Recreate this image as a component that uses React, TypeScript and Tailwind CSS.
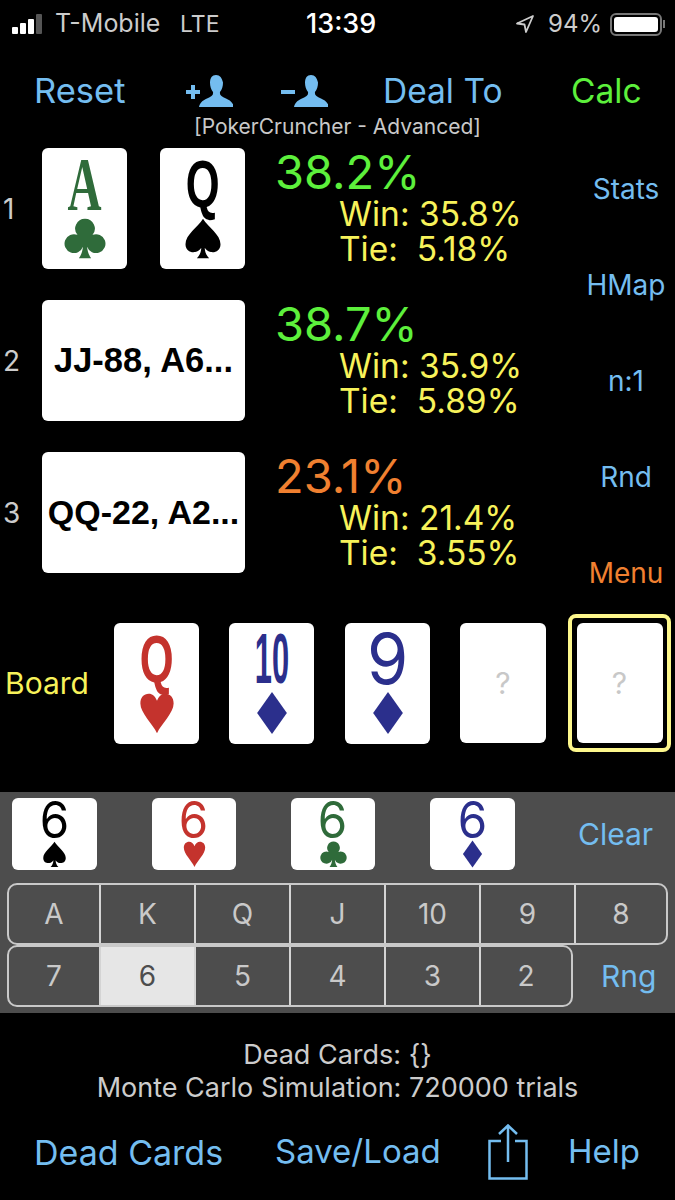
import React from 'react';

type Suit = 'spade' | 'heart' | 'diamond' | 'club';

const suitColor: Record<Suit, string> = {
  spade: 'text-black',
  heart: 'text-[#c4332d]',
  diamond: 'text-[#2b2f8c]',
  club: 'text-[#2f6b3a]',
};

const SuitIcon: React.FC<{ suit: Suit; className: string }> = ({ suit, className }) => (
  <svg viewBox="0 0 24 24" fill="currentColor" className={`${className} ${suitColor[suit]}`}>
    {suit === 'spade' && (
      <path d="M12 1C9 6 2 10 2 15.500 2 19 5 20.500 7.500 20c1.500-.3 2.800-1.200 3.500-2.500 0 2.500-1 4.500-2.500 6h7c-1.500-1.500-2.500-3.500-2.500-6 .7 1.300 2 2.200 3.500 2.500 2.500.5 5.500-1 5.500-4.500C22 10 15 6 12 1Z" />
    )}
    {suit === 'heart' && (
      <path d="M12 23.500C9.500 18 2.500 12 2.500 6.500 2.500 3 4.500 1 7.300 1 9.300 1 11 2.500 12 5c1-2.500 2.700-4 4.700-4C19.500 1 21.500 3 21.500 6.500 21.500 12 14.500 18 12 23.500Z" />
    )}
    {suit === 'diamond' && <path d="M12 0 20.500 12 12 24 3.500 12Z" />}
    {suit === 'club' && (
      <path d="M12 1a5.600 5.600 0 0 0-4.300 9.200A5.400 5.400 0 1 0 10.800 17c-.2 2.600-1 4.800-2.300 6.500h7c-1.300-1.700-2.100-3.900-2.300-6.500a5.400 5.400 0 1 0 3.100-6.800A5.600 5.600 0 0 0 12 1Z" />
    )}
  </svg>
);

const BigCard: React.FC<{ rank: string; suit: Suit; rankClass: string }> = ({ rank, suit, rankClass }) => (
  <div className="w-[85px] h-[121px] bg-white rounded-[6px] flex flex-col items-center pt-[10px] shrink-0">
    <div className={`h-[52px] flex items-center justify-center leading-none ${suitColor[suit]} ${rankClass}`}>{rank}</div>
    <SuitIcon suit={suit} className="w-[42px] h-[42px] mt-[7px]" />
  </div>
);

const BlankCard: React.FC = () => (
  <div className="w-[86px] h-[120px] bg-white rounded-[6px] flex items-center justify-center shrink-0">
    <span className="text-[30px] text-[#c8c8c8]">?</span>
  </div>
);

const PickCard: React.FC<{ suit: Suit; className: string }> = ({ suit, className }) => (
  <div className={`h-[72px] bg-white rounded-[6px] flex flex-col items-center pt-[3px] shrink-0 ${className}`}>
    <div className={`h-[38px] flex items-center text-[50px] leading-none font-normal scale-x-[0.95] ${suitColor[suit]}`}>6</div>
    <SuitIcon suit={suit} className="w-[27px] h-[28px] mt-[1px]" />
  </div>
);

const PersonIcon: React.FC<{ minus?: boolean }> = ({ minus }) => (
  <svg viewBox="0 0 47 32" fill="#74bdf0" className="w-[47px] h-[32px]">
    {minus ? <rect x="0" y="15" width="14" height="4" /> : <path d="M0 15h5v-5h4v5h5v4H9v5H5v-5H0Z" />}
    <path d="M30 0c-4 0-6 3-6 7.500 0 4 1 7 3 9.500.6 3-1.500 4.500-6 6.500-3 1.300-7 3.500-8 8.500h35c-1-5-5-7.200-8-8.500-4.500-2-6.600-3.500-6-6.500 2-2.500 3-5.500 3-9.500C36 3 34 0 30 0Z" />
  </svg>
);

const PlayerStats: React.FC<{ pct: string; win: string; tie: string; pctClass: string }> = ({ pct, win, tie, pctClass }) => (
  <div className="ml-[30px] -mt-[3px] flex flex-col">
    <div className={`h-[49px] text-[47px] leading-[48px] ${pctClass}`}>{pct}</div>
    <div className="ml-[64px] text-[33.500px] leading-[35px] text-[#f7f25a] whitespace-pre">
      <div>Win: {win}</div>
      <div>Tie:  {tie}</div>
    </div>
  </div>
);

const SegRow: React.FC<{ items: string[]; selected?: string; className: string }> = ({ items, selected, className }) => (
  <div className={`h-[62px] flex border-2 border-[#c9c9c9] rounded-[10px] overflow-hidden ${className}`}>
    {items.map((item, i) => (
      <div
        key={item}
        className={`flex items-center justify-center text-[28px] ${i === 0 ? 'w-[92px]' : i === items.length - 1 ? 'flex-1' : 'w-[95px]'} ${
          i < items.length - 1 ? 'border-r-2 border-[#d4d4d4]' : ''
        } ${item === selected ? 'bg-[#e6e6e6] text-[#4d4d4d]' : 'text-[#c9c9c9]'}`}
      >
        {item}
      </div>
    ))}
  </div>
);

const App: React.FC = () => {
  return (
    <div className="w-[675px] h-[1200px] bg-black overflow-hidden font-['Inter',sans-serif] text-[#74bdf0]">
      {/* status bar */}
      <div className="h-[48px] flex items-center pl-[12px] text-[#cccccc] text-[25px]">
        <div className="flex items-end gap-[2px] w-[36px] h-[20px]">
          <div className="w-[6px] h-[7px] rounded-[1px] bg-white" />
          <div className="w-[6px] h-[11px] rounded-[1px] bg-white" />
          <div className="w-[6px] h-[15px] rounded-[1px] bg-white" />
          <div className="w-[6px] h-[20px] rounded-[1px] bg-[#555555]" />
        </div>
        <span className="ml-[7px] w-[125px]">T-Mobile</span>
        <span className="w-[126px] text-[23px]">LTE</span>
        <span className="w-[209px] text-white text-[27px] font-medium">13:39</span>
        <svg viewBox="0 0 20 20" className="w-[20px] h-[20px]" fill="none" stroke="#cccccc" strokeWidth="1.800">
          <path d="M18 2 2 9.500l7.500 1 1.500 7.500Z" strokeLinejoin="round" />
        </svg>
        <span className="ml-[13px] w-[62px] text-[24px]">94%</span>
        <div className="w-[52px] h-[23px] border-2 border-[#777777] rounded-[6px] p-[2px]">
          <div className="w-full h-full bg-white rounded-[3px]" />
        </div>
        <div className="w-[2px] h-[8px] ml-[1px] bg-[#777777]" />
      </div>

      {/* toolbar */}
      <div className="mt-[20px] h-[46px] flex items-center pl-[34px] text-[33.500px]">
        <span className="w-[152px] text-[34.500px]">Reset</span>
        <PersonIcon />
        <div className="ml-[48px]">
          <PersonIcon minus />
        </div>
        <span className="ml-[55px] w-[188px]">Deal To</span>
        <span className="text-[#5df03c]">Calc</span>
      </div>
      <div className="h-[26px] text-center text-[21px] leading-[26px] text-[#c9c9c9]">[PokerCruncher - Advanced]</div>

      {/* players */}
      <div className="mt-[8px] h-[425px] flex">
        <div className="w-[579px] flex flex-col gap-[31px]">
          <div className="flex items-center">
            <span className="w-[42px] pl-[3px] text-[28px] text-[#cccccc]">1</span>
            <BigCard rank="A" suit="club" rankClass="text-[76px] font-bold font-['Liberation_Serif',serif] scale-x-[0.62]" />
            <div className="ml-[33px]">
              <BigCard rank="Q" suit="spade" rankClass="text-[66px] font-bold font-['Liberation_Sans',sans-serif] scale-x-[0.66]" />
            </div>
            <PlayerStats pct="38.2%" win="35.8%" tie="5.18%" pctClass="text-[#5df03c]" />
          </div>
          <div className="flex items-center">
            <span className="w-[42px] pl-[3px] text-[28px] text-[#cccccc]">2</span>
            <div className="w-[203px] h-[121px] bg-white rounded-[6px] flex items-center justify-center text-black text-[34.500px] font-bold font-['Liberation_Sans',sans-serif]">JJ-88, A6...</div>
            <PlayerStats pct="38.7%" win="35.9%" tie="5.89%" pctClass="text-[#5df03c]" />
          </div>
          <div className="flex items-center">
            <span className="w-[42px] pl-[3px] text-[28px] text-[#cccccc]">3</span>
            <div className="w-[203px] h-[121px] bg-white rounded-[6px] flex items-center justify-center text-black text-[34px] font-bold font-['Liberation_Sans',sans-serif]">QQ-22, A2...</div>
            <PlayerStats pct="23.1%" win="21.4%" tie="3.55%" pctClass="text-[#f08030]" />
          </div>
        </div>
        <div className="w-[94px] h-[425px] flex flex-col items-center pt-[23px] gap-[59px] text-[28px] leading-[37px]">
          <span>Stats</span>
          <span>HMap</span>
          <span>n:1</span>
          <span>Rnd</span>
          <span className="text-[#f08030]">Menu</span>
        </div>
      </div>

      {/* board */}
      <div className="mt-[41px] h-[138px] flex items-center pl-[5px]">
        <span className="w-[109px] text-[30px] text-[#f7f25a]">Board</span>
        <BigCard rank="Q" suit="heart" rankClass="text-[66px] font-bold font-['Liberation_Sans',sans-serif] scale-x-[0.66]" />
        <div className="ml-[30px]">
          <BigCard rank="10" suit="diamond" rankClass="text-[70px] font-bold font-['Liberation_Sans',sans-serif] scale-x-[0.44]" />
        </div>
        <div className="ml-[31px]">
          <BigCard rank="9" suit="diamond" rankClass="text-[70px] font-normal scale-x-[0.95]" />
        </div>
        <div className="ml-[30px]">
          <BlankCard />
        </div>
        <div className="ml-[22px] w-[103px] h-[138px] border-4 border-[#fdf78c] rounded-[8px] flex items-center justify-center">
          <BlankCard />
        </div>
      </div>

      {/* card picker */}
      <div className="mt-[40px] h-[221px] bg-[#4d4d4d] pt-[6px] pl-[7px]">
        <div className="flex items-center pl-[5px]">
          <PickCard suit="spade" className="w-[85px]" />
          <PickCard suit="heart" className="w-[84px] ml-[55px]" />
          <PickCard suit="club" className="w-[84px] ml-[55px]" />
          <PickCard suit="diamond" className="w-[85px] ml-[55px]" />
          <span className="ml-[63px] text-[30px]">Clear</span>
        </div>
        <div className="mt-[13px]">
          <SegRow items={['A', 'K', 'Q', 'J', '10', '9', '8']} className="w-[661px]" />
          <div className="flex items-center">
            <SegRow items={['7', '6', '5', '4', '3', '2']} selected="6" className="w-[566px]" />
            <span className="ml-[28px] text-[30px]">Rng</span>
          </div>
        </div>
      </div>

      {/* info */}
      <div className="mt-[25px] text-center text-[27px] leading-[33px] text-[#cccccc]">
        <div>Dead Cards: {'{}'}</div>
        <div>Monte Carlo Simulation: 720000 trials</div>
      </div>

      {/* bottom bar */}
      <div className="mt-[18px] h-[60px] flex items-center pl-[34px] text-[33px]">
        <span className="w-[241px] text-[34px]">Dead Cards</span>
        <span className="w-[213px]">Save/Load</span>
        <svg viewBox="0 0 40 56" fill="none" stroke="#74bdf0" strokeWidth="2.500" className="w-[40px] h-[56px]">
          <path d="M13 17H1.500v37.500h37V17H27" />
          <path d="M20 38V2M11 10l9-8.500 9 8.500" />
        </svg>
        <span className="ml-[40px]">Help</span>
      </div>
    </div>
  );
};

export default App;
